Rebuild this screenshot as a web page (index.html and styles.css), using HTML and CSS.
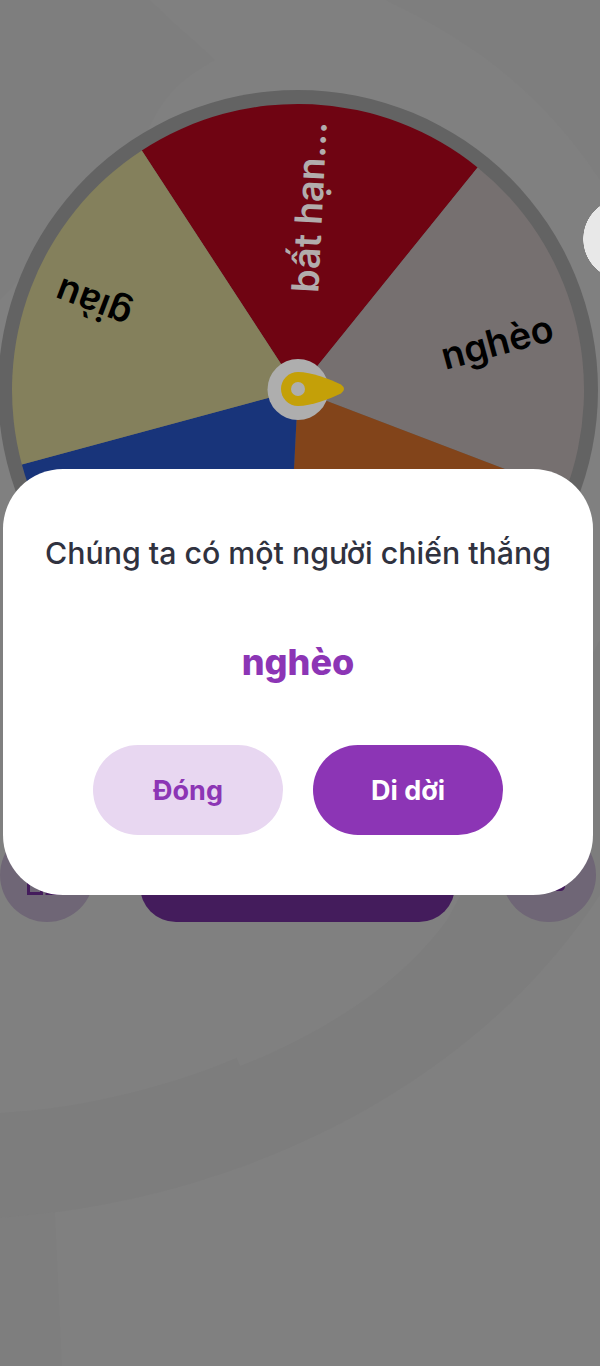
FILE: index.html
```
<!DOCTYPE html>
<html lang="vi">
<head>
<meta charset="utf-8">
<title>Vòng quay</title>
<link rel="stylesheet" href="styles.css">
</head>
<body>
<div class="app">
  <svg class="backdrop" viewBox="0 0 600 1366" aria-hidden="true">
    <path class="bg-band" d="M0 1113C150 1105 330 1040 447 920L600 640V895C480 1080 250 1200 0 1218Z"/>
    <path class="bg-base" d="M180 920H447C400 985 320 1035 240 1066Z"/>
    <path class="bg-faint" d="M0 0H150C180 30 200 45 215 60C180 80 160 95 140 150L0 300Z"/>
    <path class="bg-faint" d="M385 0H600V180C540 90 470 40 385 0Z"/>
    <path class="bg-faint" d="M0 1218L55 1212L62 1366H0Z"/>
  </svg>
  <svg class="wheel" viewBox="0 90 600 600" role="img" aria-label="Vòng quay">
    <circle class="rim" cx="298" cy="390" r="300"/>
    <path class="w-red" d="M298 390L141.8 150.4A286 286 0 0 1 477.6 167.4Z"/>
    <path class="w-gray" d="M298 390L477.6 167.4A286 286 0 0 1 565.2 492Z"/>
    <path class="w-orange" d="M298 390L565.2 492A286 286 0 0 1 283.5 675.6Z"/>
    <path class="w-blue" d="M298 390L283.5 675.6A286 286 0 0 1 21.9 464.5Z"/>
    <path class="w-olive" d="M298 390L21.9 464.5A286 286 0 0 1 141.8 150.4Z"/>
    <text class="label label-light" transform="translate(309 207) rotate(-87.1)">bất hạn...</text>
    <text class="label" transform="translate(497 342) rotate(-15.1)">nghèo</text>
    <text class="label" transform="translate(93 304) rotate(200.9)">giàu</text>
    <circle class="hub" cx="298" cy="389.5" r="30.5"/>
    <path class="pointer" d="M298 372C311 372 330 379 341 384.500Q347 389 341 393.500C330 399 311 406 298 406A17 17 0 0 1 298 372Z"/>
    <circle class="hub" cx="298" cy="389" r="7"/>
  </svg>
  <div class="actions">
    <div class="round">
      <svg class="icon" viewBox="0 0 40 40" aria-hidden="true">
        <rect x="1.500" y="1.500" width="13" height="37"/>
        <rect x="20" y="20" width="18" height="18.500"/>
      </svg>
    </div>
    <div class="spin"></div>
    <div class="round">
      <svg class="icon icon-small" viewBox="0 0 32 32" aria-hidden="true">
        <rect x="1.500" y="1.500" width="29" height="29" rx="3"/>
      </svg>
    </div>
  </div>
</div>
<div class="side-button"></div>
<div class="overlay">
  <section class="modal">
    <h1 class="title">Chúng ta có một người chiến thắng</h1>
    <p class="winner">nghèo</p>
    <div class="buttons">
      <button class="btn btn-soft">Đóng</button>
      <button class="btn btn-solid">Di dời</button>
    </div>
  </section>
</div>
</body>
</html>
```
FILE: styles.css
```
* { box-sizing: border-box; }
html, body { margin: 0; padding: 0; }
body {
  width: 600px;
  height: 1366px;
  overflow: hidden;
  position: relative;
  background: #808080;
  font-family: "Inter", "Noto Sans", sans-serif;
}
.app { position: relative; width: 600px; height: 1366px; padding-top: 90px; }
.backdrop { position: absolute; left: 0; top: 0; width: 600px; height: 1366px; }
.bg-band { fill: #7d7d7d; }
.bg-base { fill: #808080; }
.bg-faint { fill: #7e7e7e; }
.wheel { position: relative; display: block; width: 600px; height: 600px; overflow: hidden; }
.rim { fill: #636363; }
.w-red { fill: #6f0412; }
.w-gray { fill: #767070; }
.w-orange { fill: #82441a; }
.w-blue { fill: #18347a; }
.w-olive { fill: #84805c; }
.label {
  font-family: "Inter", "Noto Sans", sans-serif;
  font-size: 37.500px;
  font-weight: 600;
  fill: #000;
  text-anchor: middle;
  dominant-baseline: central;
}
.label-light { fill: #b2acac; }
.hub { fill: #aeaeae; }
.pointer { fill: #c4a008; }
.actions {
  position: relative;
  display: flex;
  justify-content: space-between;
  width: 596px;
  height: 94px;
  margin-top: 138px;
}
.round {
  width: 94px;
  height: 94px;
  border-radius: 50%;
  background: #6f6676;
  display: flex;
  align-items: center;
  justify-content: center;
}
.icon { width: 40px; height: 40px; }
.icon-small { width: 32px; height: 32px; }
.icon rect { fill: none; stroke: #441c5c; stroke-width: 3; }
.spin { width: 315px; margin: 0 1px 0 0; background: #441c5c; border-radius: 36px; }
.side-button {
  position: absolute;
  left: 583px;
  top: 198px;
  width: 17px;
  height: 82px;
  background: radial-gradient(circle at 41px 41px, #e8e8e8 40.500px, rgba(232, 232, 232, 0) 41px);
}
.overlay {
  position: absolute;
  inset: 0;
  display: flex;
  align-items: center;
  justify-content: center;
  padding: 0 7px 2px 3px;
}
.modal {
  width: 590px;
  height: 426px;
  background: #fff;
  border-radius: 60px;
  display: flex;
  flex-direction: column;
  align-items: center;
  padding-top: 64px;
}
.title { margin: 0; font-size: 30.300px; line-height: 40px; font-weight: 500; color: #30323f; white-space: nowrap; }
.winner { margin: 65px 0 0; font-size: 36px; line-height: 48px; font-weight: 800; color: #8c35b5; }
.buttons { display: flex; gap: 30px; margin-top: 59px; }
.btn {
  width: 190px;
  height: 90px;
  border: 0;
  border-radius: 45px;
  font-family: inherit;
  font-size: 27px;
  font-weight: 700;
  padding: 0;
}
.btn-soft { background: #e8d7f1; color: #8c35b5; }
.btn-solid { background: #8c35b5; color: #fff; }
```
